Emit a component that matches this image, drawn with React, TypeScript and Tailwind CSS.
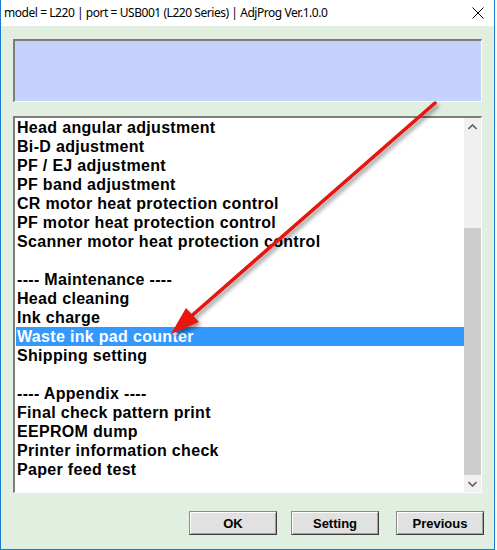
const items: string[] = [
  "Head angular adjustment",
  "Bi-D adjustment",
  "PF / EJ adjustment",
  "PF band adjustment",
  "CR motor heat protection control",
  "PF motor heat protection control",
  "Scanner motor heat protection control",
  "",
  "---- Maintenance ----",
  "Head cleaning",
  "Ink charge",
  "Waste ink pad counter",
  "Shipping setting",
  "",
  "---- Appendix ----",
  "Final check pattern print",
  "EEPROM dump",
  "Printer information check",
  "Paper feed test",
];

const selected = "Waste ink pad counter";

const WinButton = ({ label, className = "" }: { label: string; className?: string }) => (
  <button
    className={`w-[88px] h-[24px] bg-[#e1e1e1] border border-[#8a8a8a] border-b-[#3c3c3c] border-r-[#3c3c3c] shadow-[inset_1px_1px_0_#ffffff,inset_-1px_-1px_0_#a0a0a0] text-[13px] font-bold text-black leading-none font-['Liberation_Sans',Arial,sans-serif] ${className}`}
  >
    {label}
  </button>
);

export default function App() {
  return (
    <div className="relative w-[497px] h-[550px] bg-white overflow-hidden">
      <div className="w-[495px] h-[550px] flex flex-col border-x border-b border-[#1979ca]">
        {/* Title bar */}
        <div className="h-[26px] flex items-center justify-between bg-white pl-[3px] pr-[8px]">
          <span className="text-[12px] tracking-[-0.45px] text-black font-['Noto_Sans',sans-serif] leading-none">
            model = L220 | port = USB001 (L220 Series) | AdjProg Ver.1.0.0
          </span>
          <svg width="12" height="12" viewBox="0 0 12 12" className="mr-[2px]">
            <path d="M0.5 0.5 L11.5 11.5 M11.5 0.5 L0.5 11.5" stroke="#000" strokeWidth="1" />
          </svg>
        </div>

        {/* Client area */}
        <div className="flex-1 bg-[#e1efe1] px-[12px] pt-[13px] flex flex-col">
          <div className="h-[63px] bg-[#c6d1fe] border-t-2 border-l-2 border-[#7d7d7d] border-b border-r border-b-white border-r-white" />

          <div className="mt-[14px] h-[377px] bg-white border-t-2 border-l-2 border-[#7d7d7d] border-b border-r border-b-white border-r-white flex">
            <div className="flex-1 pl-[1px] font-['Liberation_Sans',Arial,sans-serif] font-bold text-[16px] tracking-[0.32px]">
              {items.map((t, i) => (
                <div
                  key={i}
                  className={`h-[19px] leading-[19px] pl-[1px] whitespace-nowrap ${
                    t === selected ? "bg-[#3399ff] text-white" : "text-black"
                  }`}
                >
                  {t}
                </div>
              ))}
            </div>
            {/* Scrollbar */}
            <div className="w-[17px] bg-[#f0f0f0] flex flex-col">
              <div className="h-[17px] flex items-center justify-center">
                <svg width="9" height="6" viewBox="0 0 9 6">
                  <path d="M0.5 5 L4.5 1 L8.5 5" stroke="#606060" strokeWidth="1.6" fill="none" />
                </svg>
              </div>
              <div className="h-[93px]" />
              <div className="flex-1 bg-[#cdcdcd]" />
              <div className="h-[17px] flex items-center justify-center">
                <svg width="9" height="6" viewBox="0 0 9 6">
                  <path d="M0.5 1 L4.5 5 L8.5 1" stroke="#606060" strokeWidth="1.6" fill="none" />
                </svg>
              </div>
            </div>
          </div>

          <div className="mt-[18px] flex justify-end mr-[-2px]">
            <WinButton label="OK" className="mr-[14px]" />
            <WinButton label="Setting" className="mr-[17px]" />
            <WinButton label="Previous" />
          </div>
        </div>
      </div>

      {/* Red annotation arrow */}
      <svg className="absolute inset-0 pointer-events-none" width="497" height="550">
        <defs>
          <filter id="sh" x="-20%" y="-20%" width="140%" height="140%">
            <feDropShadow dx="2" dy="3" stdDeviation="2" floodColor="#000" floodOpacity="0.45" />
          </filter>
        </defs>
        <g filter="url(#sh)">
          <line x1="435" y1="103" x2="188" y2="319" stroke="#e8120e" strokeWidth="3.5" strokeLinecap="round" />
          <polygon points="171,334 199,322 186,308" fill="#e8120e" />
        </g>
      </svg>
    </div>
  );
}
